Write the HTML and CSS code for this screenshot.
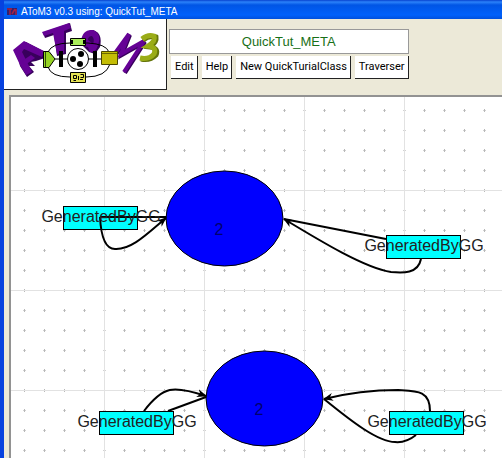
FILE: index.html
```
<!DOCTYPE html>
<html lang="en">
<head>
<meta charset="utf-8">
<title>AToM3 v0.3 using: QuickTut_META</title>
<link rel="stylesheet" href="styles.css">
</head>
<body>
<div class="window">
  <header class="titlebar">
    <svg class="app-icon" width="10" height="8" viewBox="0 0 10 8" aria-hidden="true">
      <path d="M0 0H10V7H0Z" fill="#35206c"/>
      <path d="M0 1H5M3 1V7M5 6L8 1M9 1V7" stroke="#a32148" stroke-width="1.5" fill="none"/>
    </svg>
    <h1 class="title">AToM3 v0.3 using: QuickTut_META</h1>
  </header>
  <div class="toolbar">
    <div class="logo">
      <svg width="162" height="70" viewBox="4 19 162 70" role="img" aria-label="AToM3 logo">
        <g fill="#38005c">
          <path d="M17 52L26 42L45 52V58L36 61L31 62L35 66L29 66L34 72L27 77L20 66Z"/>
          <path d="M43 33L70 23L72 31L66 33V54L57 56L54 35L45 38Z"/>
          <path d="M83 46Q83 30 93 30Q103 33 100 47L95 54L89 52Z"/>
        </g>
        <g fill="#650295">
          <path d="M13 50L24 41L44 51L42 57L24 49L22 52L32 72L26 75L20 65Z"/>
          <path d="M22 61L31 55L35 58L25 65Z"/>
          <path d="M42 32L69 23L71 28L64 31V53L57 54L53 33L44 36Z"/>
          <path fill-rule="evenodd" d="M81 42Q82 29 93 30Q102 34 98 45Q96 53 90 52L88 47L83 46ZM88 40L93 44Q95 39 92 36Q88 36 88 40Z"/>
        </g>
        <path d="M114 57L130 35L122 55L145 42L125 73" fill="none" stroke="#38005c" stroke-width="4"/>
        <path d="M113 56L129 34L121 54L144 41L124 72" fill="none" stroke="#650295" stroke-width="4"/>
        <path d="M143 40Q149 35 156 37Q157 42 150 47Q159 48 156 55Q150 61 141 59" fill="none" stroke="#65750b" stroke-width="5"/>
        <path d="M142 39Q148 34 154 36Q156 41 148 46Q157 47 154 54Q149 60 140 58" fill="none" stroke="#9aac17" stroke-width="5"/>
        <path d="M48 52Q52 43 70 43H88Q106 44 109 52M48 67Q51 77 70 77H86Q106 77 110 64M55 59H102" fill="none" stroke="#000"/>
        <path d="M43.500 51.500H49L55 59L49 67.500H43.500Z" fill="#96d323" stroke="#000"/>
        <path d="M45.500 52V67" stroke="#324d0d"/>
        <path d="M59 51H63V67H59ZM93 51H97V67H93Z"/>
        <circle cx="78" cy="59" r="10.500" fill="#fff" stroke="#000"/>
        <circle cx="81" cy="54" r="3"/><circle cx="73" cy="59" r="3"/><circle cx="80" cy="64" r="3"/>
        <path d="M70.500 38.500H85.500V45.500H70.500Z" fill="#a9ed59" stroke="#000"/>
        <path d="M70 40H73V44H70ZM83 40H86V44H83Z"/>
        <path d="M101.500 51.500H117.500V64.500H101.500Z" fill="#c4bd05" stroke="#4b4700"/>
        <path d="M102 53.500H117" stroke="#6e6900"/>
        <path d="M70.500 72.500H85.500V82.500H70.500Z" fill="#e5e254" stroke="#000"/>
        <path d="M73.500 75.500H76.500V78.500H73.500ZM80.500 74.500H83.500V77.500H80.500M73.500 80.500H76M78.500 76V80M80 79.500H83" fill="none" stroke="#000"/>
      </svg>
    </div>
    <div class="controls">
      <input class="model-name" type="text" value="QuickTut_META" aria-label="Model name" readonly>
      <div class="buttons">
        <button type="button">Edit</button>
        <button type="button">Help</button>
        <button type="button">New QuickTurialClass</button>
        <button type="button">Traverser</button>
      </div>
    </div>
  </div>
  <main class="canvas">
    <svg class="diagram" role="img" aria-label="Model graph">
      <defs>
        <pattern id="dots" x="3" y="3" width="20" height="20" patternUnits="userSpaceOnUse">
          <path d="M9 10H12V11H9Z" fill="#d2d2d2"/>
          <path d="M10 9H11V12H10Z" fill="#b8b8b8"/>
        </pattern>
        <pattern id="lines" x="-7" y="-7" width="100" height="100" patternUnits="userSpaceOnUse">
          <path d="M0 .5H100M.5 0V100" stroke="#e2e2e2"/>
        </pattern>
        <marker id="arrow" markerUnits="userSpaceOnUse" markerWidth="12" markerHeight="10" refX="9" refY="5" orient="auto-start-reverse">
          <path d="M0 1L10 5L0 9L3 5Z"/>
        </marker>
      </defs>
      <rect width="100%" height="100%" fill="url(#dots)"/>
      <rect width="100%" height="100%" fill="url(#lines)"/>
      <g transform="translate(-11 -97)">
        <g class="nodes">
          <ellipse cx="224.500" cy="218.500" rx="58.500" ry="47.500"/>
          <ellipse cx="264.500" cy="398.500" rx="58.500" ry="47.500"/>
        </g>
        <g class="links">
          <rect x="63.500" y="206.500" width="74" height="23"/>
          <rect x="386.500" y="235.500" width="74" height="23"/>
          <rect x="99.500" y="411.500" width="74" height="23"/>
          <rect x="389.500" y="411.500" width="74" height="23"/>
        </g>
        <g class="edges">
          <path d="M166 217H100"/>
          <path d="M100 217C101 237 106 249 115 249C132 250 149 232 166 218" marker-end="url(#arrow)"/>
          <path d="M284 219L386 239"/>
          <path d="M421 259C418 274 403 273 391 272C365 268 322 242 284 219" marker-end="url(#arrow)"/>
          <path d="M144 411C163 386 173 385 206 396" marker-end="url(#arrow)"/>
          <path d="M206 397L168 411"/>
          <path d="M430 411C430 390 416 391 398 390C376 390 348 393 324 399" marker-end="url(#arrow)"/>
          <path d="M324 399C351 421 378 442 395 442C405 443 411 439 416 435"/>
        </g>
        <g class="labels">
          <text x="101" y="222">GeneratedByGG</text>
          <text x="424" y="251">GeneratedByGG</text>
          <text x="137" y="427">GeneratedByGG</text>
          <text x="427" y="427">GeneratedByGG</text>
          <text class="count" x="219" y="235">2</text>
          <text class="count" x="259" y="415">2</text>
        </g>
      </g>
    </svg>
  </main>
</div>
</body>
</html>
```
FILE: styles.css
```
* {
  box-sizing: border-box;
}

body {
  margin: 0;
  font-family: "Liberation Sans", Arial, sans-serif;
  background: #ece9d8;
}

.window {
  display: flex;
  flex-direction: column;
  min-height: 100vh;
  border-left: 4px solid #0742df;
}

.titlebar {
  display: flex;
  align-items: center;
  gap: 4px;
  height: 19px;
  padding: 4px 3px 0;
  background: linear-gradient(#0742cf, #2b82fa 2px, #0055e5 5px, #0061fb 15px, #0050dc);
}

.title {
  margin: 0;
  color: #fff;
  font: 10px/14px "Liberation Sans", Arial, sans-serif;
  white-space: nowrap;
}

.toolbar {
  display: flex;
  align-items: flex-start;
  gap: 2px;
  padding-bottom: 5px;
}

.logo {
  border-right: 1px solid #222;
  border-bottom: 1px solid #222;
  background: #fff;
}

.logo svg {
  display: block;
}

.controls {
  display: flex;
  flex-direction: column;
  gap: 2px;
  padding-top: 10px;
}

.model-name {
  width: 100%;
  height: 25px;
  padding: 0;
  border: 1px solid #999;
  background: #fff;
  color: #187018;
  font: 13px/20px "Liberation Sans", Arial, sans-serif;
  text-align: center;
}

.buttons {
  display: flex;
  gap: 4px;
  padding: 0 0 0 2px;
}

.buttons button {
  height: 23px;
  padding: 0 3px 0 4px;
  border: 0 solid #222;
  border-width: 0 1px 1px 0;
  background: #fff;
  color: #000;
  font: 11px/20px Roboto, Arial, sans-serif;
  white-space: nowrap;
}

.canvas {
  display: flex;
  flex: 1;
  min-height: 360px;
  margin-left: 5px;
  border: solid #929292;
  border-width: 2px 0 0 2px;
  background: #fff;
}

.diagram {
  flex: 1;
  width: 100%;
}

.nodes ellipse {
  fill: #00f;
  stroke: #000;
}

.links rect {
  fill: #0ff;
  stroke: #000;
}

.edges path {
  fill: none;
  stroke: #000;
  stroke-width: 2px;
}

.labels text {
  fill: #222;
  font-size: 16px;
  text-anchor: middle;
}

.labels .count {
  fill: #00006e;
}
```
